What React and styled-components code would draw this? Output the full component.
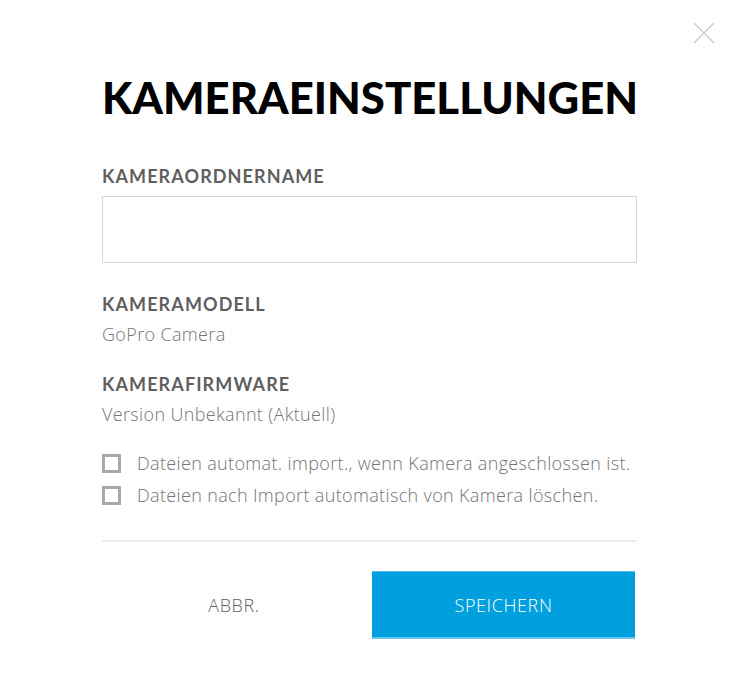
import React from 'react';
import styled, { createGlobalStyle } from 'styled-components';

const GlobalStyle = createGlobalStyle`
    html, body {
        margin: 0;
        padding: 0;
        background: #ffffff;
    }
    body {
        font-family: "Open Sans", Lato, sans-serif;
    }
`;

const Dialog = styled.div`
    position: relative;
    width: 742px;
    height: 685px;
    background: #ffffff;
    box-sizing: border-box;
    padding: 70px 0 0 102px;
`;

const CloseButton = styled.button`
    position: absolute;
    top: 22px;
    right: 27px;
    width: 22px;
    height: 22px;
    padding: 0;
    border: none;
    background: transparent;
    cursor: pointer;
`;

const Content = styled.div`
    width: 535px;
    display: flex;
    flex-direction: column;
`;

const Title = styled.h1`
    margin: 0 0 41px;
    font-family: Lato, sans-serif;
    font-size: 43.7px;
    line-height: 54px;
    font-weight: 900;
    color: #000000;
`;

const Label = styled.div`
    font-family: Lato, sans-serif;
    font-size: 18px;
    line-height: 22px;
    font-weight: 700;
    letter-spacing: 1.1px;
    color: #5f5f5f;
    margin-bottom: ${p => p.$gap || 8}px;
`;

const TextInput = styled.input`
    box-sizing: border-box;
    width: 535px;
    height: 67px;
    border: 1px solid #d6d6d6;
    outline: none;
    padding: 0 16px;
    font-family: inherit;
    font-size: 18px;
    margin-bottom: 30px;
`;

const Value = styled.div`
    font-size: 18px;
    line-height: 22px;
    font-weight: 300;
    letter-spacing: 0.35px;
    color: #747474;
    margin-bottom: 28px;
`;

const CheckList = styled.div`
    display: flex;
    flex-direction: column;
    gap: 11px;
`;

const CheckRow = styled.label`
    display: flex;
    align-items: center;
    gap: 16px;
    font-size: 18px;
    line-height: 21px;
    font-weight: 300;
    letter-spacing: 0.35px;
    color: #747474;
    cursor: pointer;
`;

const Box = styled.span`
    box-sizing: border-box;
    width: 19px;
    height: 19px;
    border: 3px solid #a9a9a9;
    background: #ffffff;
    flex-shrink: 0;
`;

const Divider = styled.hr`
    width: 535px;
    margin: 34px 0 29px;
    border: none;
    border-top: 2px solid #ececec;
`;

const Actions = styled.div`
    display: grid;
    grid-template-columns: 264px 263px;
    column-gap: 6px;
    align-items: stretch;
`;

const Button = styled.button`
    height: 68px;
    border: none;
    font-family: inherit;
    font-size: 18px;
    font-weight: 300;
    letter-spacing: 0.6px;
    cursor: pointer;
    background: ${p => (p.$primary ? '#00a0df' : 'transparent')};
    color: ${p => (p.$primary ? '#ffffff' : '#5f5f5f')};
    border-top: ${p => (p.$primary ? '1px solid #55bde8' : 'none')};
    border-bottom: ${p => (p.$primary ? '2px solid #66c4ec' : 'none')};
`;

const CloseIcon = () => (
    <svg width="22" height="22" viewBox="0 0 22 22" fill="none">
        <path d="M1 1 L21 21 M21 1 L1 21" stroke="#cfcfcf" strokeWidth="1.6" />
    </svg>
);

const App = () => (
    <>
        <GlobalStyle />
        <Dialog>
            <CloseButton aria-label="close">
                <CloseIcon />
            </CloseButton>
            <Content>
                <Title>KAMERAEINSTELLUNGEN</Title>
                <Label $gap={9}>KAMERAORDNERNAME</Label>
                <TextInput type="text" />
                <Label>KAMERAMODELL</Label>
                <Value>GoPro Camera</Value>
                <Label>KAMERAFIRMWARE</Label>
                <Value>Version Unbekannt (Aktuell)</Value>
                <CheckList>
                    <CheckRow>
                        <Box />
                        Dateien automat. import., wenn Kamera angeschlossen ist.
                    </CheckRow>
                    <CheckRow>
                        <Box />
                        Dateien nach Import automatisch von Kamera löschen.
                    </CheckRow>
                </CheckList>
                <Divider />
                <Actions>
                    <Button>ABBR.</Button>
                    <Button $primary>SPEICHERN</Button>
                </Actions>
            </Content>
        </Dialog>
    </>
);

export default App;
